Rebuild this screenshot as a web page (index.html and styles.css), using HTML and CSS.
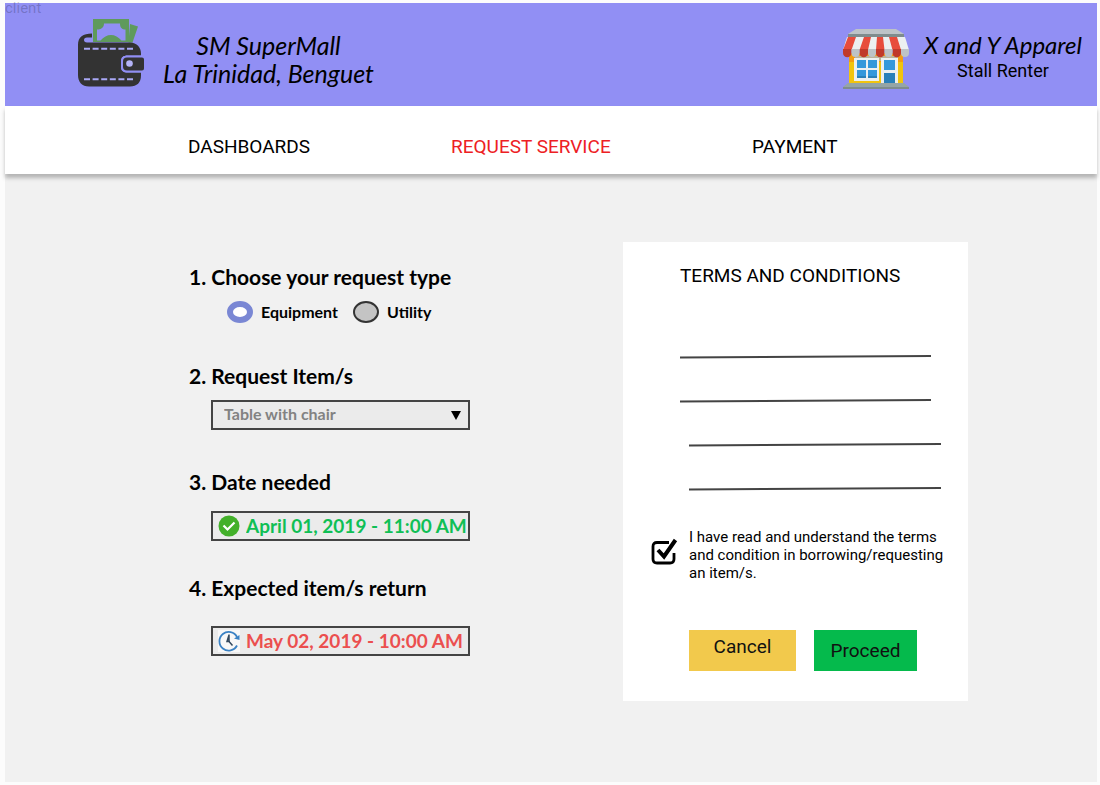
FILE: index.html
```html
<!DOCTYPE html>
<html lang="en">
<head>
<meta charset="utf-8">
<meta name="viewport" content="width=device-width, initial-scale=1">
<title>Request Service</title>
<link rel="stylesheet" href="styles.css">
</head>
<body>
<span class="frame-label">client</span>
<div class="page">
  <header class="header">
    <div class="brand">
      <svg class="brand-icon" viewBox="0 0 66 68" aria-hidden="true">
        <path fill="#5f9a5c" d="M52 5l8 2.500-5.500 16h-4z"/>
        <path fill="#5f9a5c" d="M15 0h36v23H15z"/>
        <path fill="#918ff4" d="M26 4.500h16c0 4 2 6 5.500 6v11h-4c-6-7.500-15-7.500-21 0h-3.500v-11c4 0 7-2 7-6z"/>
        <path fill="#333" d="M14 14.500v4H9c-4 0-4 5 0 5h43c7 0 11 5 11 11v2H50c-5 0-7 2-7 6v5c0 4 2 6 7 6h13v3c0 7-4 11-11 11H11C4 67.500 0 63 0 56V26C0 18 5 14.500 14 14.500z"/>
        <path fill="#918ff4" d="M63 36.500H50c-5 0-7 2-7 6v5c0 4 2 6 7 6h13z"/>
        <path fill="#333" d="M49 38.500h15a2 2 0 0 1 2 2v9a2 2 0 0 1-2 2H49q-4 0-4-4v-5q0-4 4-4z"/>
        <circle cx="51.500" cy="44.500" r="3.300" fill="#b4b3f7"/>
        <path stroke="#a9a8f6" stroke-width="2" stroke-dasharray="6 2.600" d="M6 29.700h49M6 60.300h49"/>
      </svg>
      <p class="brand-name">SM SuperMall<br>La Trinidad, Benguet</p>
    </div>
    <div class="account">
      <svg class="account-icon" viewBox="0 0 66 60" aria-hidden="true">
        <path fill="#f1c40f" d="M6 24h54v32H6z"/>
        <path fill="#f39c12" d="M6 24h54v9H6z"/>
        <path fill="#bdb39a" d="M12 27h43v5H12z"/>
        <path fill="#bdc3c7" d="M13 0h40l8 5H5z"/>
        <path fill="#7f8c8d" d="M5 5h56v3H5z"/>
        <path fill="#ecf0f1" d="M4 8h58l4 13H0z"/>
        <path fill="#e74c3c" d="M5 8h8L8.500 21H0zM21 8h7l-3 13h-8.500zM34 8h6l1.500 13H33zM46 8h8l4 13h-8.500z"/>
        <path fill="#c0392b" d="M0 20h8.500v4a4.200 4.200 0 0 1-8.500 0zM16.500 20H25v4a4.200 4.200 0 0 1-8.500 0zM33 20h8.500v4a4.200 4.200 0 0 1-8.500 0zM49.500 20H58v4a4.200 4.200 0 0 1-8.500 0z"/>
        <path fill="#bdc3c7" d="M8.500 20h8v4a4 4 0 0 1-8 0zM25 20h8v4a4 4 0 0 1-8 0zM41.500 20h8v4a4 4 0 0 1-8 0zM58 20h8v4a4 4 0 0 1-8 0z"/>
        <path fill="#ecf0f1" d="M11 29h25v23H11zM38 29h17v26H38z"/>
        <path fill="#3498db" d="M14 31h9v8h-9zM25 31h9v8h-9zM14 41h9v8h-9zM25 41h9v8h-9zM41 31h11v10H41z"/>
        <path fill="#2980b9" d="M14 47h9v2h-9zM25 47h9v2h-9zM41 44h11v11H41z"/>
        <path fill="#95a5a6" d="M5 54h56l5 4H0z"/>
        <path fill="#7f8c8d" d="M0 58h66v2H0z"/>
      </svg>
      <p class="account-text"><span class="account-name">X and Y Apparel</span><span class="account-role">Stall Renter</span></p>
    </div>
  </header>

  <nav class="nav">
    <a class="nav-link" href="#dashboards">DASHBOARDS</a>
    <a class="nav-link nav-link-active" href="#request">REQUEST SERVICE</a>
    <a class="nav-link" href="#payment">PAYMENT</a>
  </nav>

  <main>
    <form class="content">
      <div class="steps">
        <fieldset class="step">
          <legend class="step-title">1. Choose your request type</legend>
          <div class="options">
            <label class="option"><input class="radio" type="radio" name="type" checked>Equipment</label>
            <label class="option"><input class="radio" type="radio" name="type">Utility</label>
          </div>
        </fieldset>
        <div class="step">
          <label class="step-title" for="item">2. Request Item/s</label>
          <div class="field">
            <select class="select" id="item"><option>Table with chair</option></select>
            <svg class="caret" viewBox="0 0 10 9" aria-hidden="true"><path d="M0 0h10L5 9z"/></svg>
          </div>
        </div>
        <div class="step step-date">
          <label class="step-title" for="needed">3. Date needed</label>
          <div class="field">
            <svg class="field-icon" viewBox="0 0 22 22" aria-hidden="true"><circle cx="11" cy="11" r="10.500" fill="#43b02a"/><path d="M5.500 10.500l4 4 7-7" fill="none" stroke="#fff" stroke-width="2.200"/></svg>
            <input class="date date-needed" id="needed" type="text" value="April 01, 2019 - 11:00 AM">
          </div>
        </div>
        <div class="step step-return">
          <label class="step-title" for="return">4. Expected item/s return</label>
          <div class="field">
            <svg class="field-icon" viewBox="0 0 22 22" aria-hidden="true"><path fill="#f8f8f8" d="M0 0h22v22H0z"/><path d="M19 7A9.300 9.300 0 1 0 19 15.500" fill="none" stroke="#3b82c4" stroke-width="1.800"/><path fill="#3b82c4" d="M16 8.500l5.500 1.500V5z"/><path d="M11 4.500v7l3.500 4M11 5l-2 6.500h3" fill="none" stroke="#34495e" stroke-width="1.500"/></svg>
            <input class="date date-return" id="return" type="text" value="May 02, 2019 - 10:00 AM">
          </div>
        </div>
      </div>

      <section class="card">
        <h2 class="card-title">TERMS AND CONDITIONS</h2>
        <svg class="terms" viewBox="0 0 262 136" aria-hidden="true">
          <path d="M0 2.500L251 1M0 46.500L251 45M9 90.500L261 89M9 134.500L261 133"/>
        </svg>
        <label class="agree">
          <span class="tick">
            <input class="tick-input" type="checkbox" checked>
            <svg class="tick-icon" viewBox="0 0 28 28" aria-hidden="true"><path d="M18 4.500H6Q2 4.500 2 8.500V21Q2 25 6 25H19Q23 25 23 21V15" fill="none" stroke="#000" stroke-width="2.800"/><path d="M7 12l6 6.500L24.500 2" fill="none" stroke="#000" stroke-width="4"/></svg>
          </span>
          <span>I have read and understand the terms and condition in borrowing/requesting an item/s.</span>
        </label>
        <div class="actions">
          <button class="button button-cancel" type="button">Cancel</button>
          <button class="button button-proceed" type="submit">Proceed</button>
        </div>
      </section>
    </form>
  </main>
</div>
</body>
</html>
```
FILE: styles.css
```css
* { box-sizing: border-box; }

body {
  margin: 0;
  padding: 3px 3px 3px 5px;
  min-height: 100vh;
  display: flex;
  background: #fcfcfc;
  color: #000;
  font-family: Roboto, sans-serif;
}

.frame-label {
  position: absolute;
  left: 5px;
  top: 0;
  font-size: 15px;
  line-height: 16px;
  color: rgba(0, 0, 0, 0.2);
}

.page {
  flex: 1;
  background: #f1f1f1;
}

.header {
  display: flex;
  justify-content: space-between;
  min-height: 103px;
  padding: 16px 15px 17px 73px;
  background: #918ff4;
}

.brand,
.account {
  display: flex;
  align-items: flex-start;
}

.brand { gap: 19px; }
.account { gap: 15px; }

.brand-icon { width: 66px; height: 68px; }

.account-icon {
  width: 66px;
  height: 60px;
  margin-top: 10px;
}

.brand-name,
.account-text {
  margin: 12px 0 0;
  text-align: center;
}

.brand-name,
.account-name {
  font-family: Lato, sans-serif;
  font-style: italic;
  line-height: 28px;
}

.brand-name { font-size: 25px; }
.account-name { font-size: 24px; }

.account-name,
.account-role { display: block; }

.account-role {
  font-size: 18px;
  line-height: 24px;
}

.nav {
  position: relative;
  display: grid;
  grid-template-columns: 263fr 301fr 345fr;
  align-items: center;
  min-height: 68px;
  padding: 13px 0 0 183px;
  background: #fff;
  box-shadow: 0 4px 4px rgba(0, 0, 0, 0.25);
}

.nav-link {
  color: #000;
  font-size: 19px;
  line-height: 24px;
  text-decoration: none;
}

.nav-link-active { color: #ed2024; }

.content {
  display: grid;
  grid-template-columns: 1fr 345px;
  align-items: start;
  padding: 68px 129px 80px 184px;
}

.steps {
  display: grid;
  grid-template-rows: minmax(99px, auto) minmax(106px, auto) minmax(106px, auto) auto;
  padding-top: 23px;
  font-family: Lato, sans-serif;
  font-weight: 700;
}

.step {
  display: flex;
  flex-direction: column;
  align-items: flex-start;
  gap: 12px;
  margin: 0;
  padding: 0;
  border: 0;
}

.step-date { gap: 17px; }
.step-return { gap: 26px; }

.step-title {
  padding: 0;
  font-size: 21px;
  line-height: 24px;
}

.options {
  display: flex;
  gap: 15px;
  padding: 12px 0 0 38px;
}

.option {
  display: flex;
  align-items: center;
  gap: 8px;
  font-size: 16px;
  line-height: 22px;
}

.radio {
  appearance: none;
  width: 26px;
  height: 22px;
  margin: 0;
  border: 2px solid #333;
  border-radius: 50%;
  background: #c4c4c4;
}

.radio:checked {
  border: 6px solid #7a87d4;
  background: #fff;
}

.field {
  position: relative;
  display: flex;
  align-items: center;
  width: 259px;
  height: 30px;
  margin-left: 22px;
  border: 2px solid #444;
  background: #ebebeb;
}

.select {
  appearance: none;
  flex: 1;
  height: 26px;
  padding: 0 24px 4px 11px;
  border: 0;
  background: none;
  color: #828282;
  font: inherit;
  font-size: 16px;
}

.caret {
  position: absolute;
  right: 7px;
  width: 10px;
  height: 9px;
  pointer-events: none;
}

.field-icon {
  flex: none;
  width: 22px;
  height: 22px;
  margin: 0 6px 0 5px;
}

.date {
  flex: 1;
  min-width: 0;
  padding: 0;
  border: 0;
  background: none;
  font: inherit;
  font-size: 19px;
  line-height: 24px;
}

.date-needed { color: #0fbf55; }
.date-return { color: #eb4f4f; }

.card {
  display: flex;
  flex-direction: column;
  padding: 22px 20px 30px 28px;
  background: #fff;
}

.card-title {
  margin: 0 0 67px 29px;
  font-size: 19px;
  font-weight: 400;
  line-height: 24px;
}

.terms {
  width: 262px;
  height: 136px;
  margin-left: 29px;
  stroke: #444;
  stroke-width: 2;
}

.agree {
  display: flex;
  gap: 10px;
  margin-top: 37px;
  font-size: 15px;
  line-height: 18px;
}

.tick {
  position: relative;
  flex: none;
  width: 28px;
  height: 28px;
  margin-top: 10px;
}

.tick-input {
  appearance: none;
  width: 28px;
  height: 28px;
  margin: 0;
}

.tick-icon {
  position: absolute;
  inset: 0;
  pointer-events: none;
}

.actions {
  display: flex;
  gap: 18px;
  margin: 48px 0 0 38px;
}

.button {
  height: 41px;
  padding: 0;
  border: 0;
  color: #111;
  font: inherit;
  font-size: 19px;
  line-height: 24px;
}

.button-cancel {
  width: 107px;
  padding-bottom: 7px;
  background: #f2c94c;
}

.button-proceed {
  width: 103px;
  background: #05ba4c;
}
```
